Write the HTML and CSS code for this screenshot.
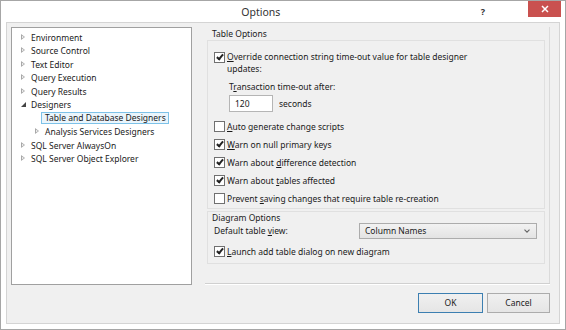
FILE: index.html
```html
<!DOCTYPE html>
<html>
<head>
    <title>Options</title>
    <link rel="stylesheet" href="styles.css">
</head>
<body>
    <div class="window">
        <div class="titlebar">
            <span class="title">Options</span>
            <span class="help">?</span>
            <span class="close">
                <svg width="8" height="8" viewBox="0 0 8 8"><path d="M1 1L7 7M7 1L1 7" stroke="#fff" stroke-width="1.5"/></svg>
            </span>
        </div>
        <div class="client">
            <div class="tree">
                <div class="node"><span class="arrow closed"></span>Environment</div>
                <div class="node"><span class="arrow closed"></span>Source Control</div>
                <div class="node"><span class="arrow closed"></span>Text Editor</div>
                <div class="node"><span class="arrow closed"></span>Query Execution</div>
                <div class="node"><span class="arrow closed"></span>Query Results</div>
                <div class="node"><span class="arrow open"></span>Designers</div>
                <div class="node child"><span class="arrow none"></span><span class="selected">Table and Database Designers</span></div>
                <div class="node child"><span class="arrow closed"></span>Analysis Services Designers</div>
                <div class="node"><span class="arrow closed"></span>SQL Server AlwaysOn</div>
                <div class="node"><span class="arrow closed"></span>SQL Server Object Explorer</div>
            </div>
            <div class="page">
                <div class="panel">
                    <div class="group-label">Table Options</div>
                    <div class="group table-group">
                        <div class="check-row multi">
                            <span class="box checked"></span>
                            <span><u>O</u>verride connection string time-out value for table designer<br>updates:</span>
                        </div>
                        <div class="timeout">
                            <div class="timeout-label">T<u>r</u>ansaction time-out after:</div>
                            <div class="timeout-row">
                                <span class="textbox">120</span>
                                <span>seconds</span>
                            </div>
                        </div>
                        <div class="check-row"><span class="box"></span><span><u>A</u>uto generate change scripts</span></div>
                        <div class="check-row"><span class="box checked"></span><span><u>W</u>arn on null primary keys</span></div>
                        <div class="check-row"><span class="box checked"></span><span>Warn about <u>d</u>ifference detection</span></div>
                        <div class="check-row"><span class="box checked"></span><span>Warn about <u>t</u>ables affected</span></div>
                        <div class="check-row"><span class="box"></span><span>Prevent <u>s</u>aving changes that require table re-creation</span></div>
                    </div>
                    <div class="group diagram-group">
                        <div class="group-label inner">Diagram Options</div>
                        <div class="view-row">
                            <span>Default table <u>v</u>iew:</span>
                            <span class="select">Column Names
                                <svg width="6" height="4" viewBox="0 0 6 4"><path d="M0.5 0.6L3 3.2L5.5 0.6" fill="none" stroke="#666" stroke-width="1.1"/></svg>
                            </span>
                        </div>
                        <div class="check-row launch"><span class="box checked"></span><span><u>L</u>aunch add table dialog on new diagram</span></div>
                    </div>
                </div>
                <div class="separator"></div>
                <div class="buttons">
                    <span class="button default">OK</span>
                    <span class="button">Cancel</span>
                </div>
            </div>
        </div>
    </div>
</body>
</html>
```

FILE: styles.css
```css
body {
    margin: 0;
    font-family: "Noto Sans", "Open Sans", sans-serif;
    font-size: 8.5px;
    color: #1a1a1a;
    background: #fff;
}
.window {
    width: 566px;
    height: 330px;
    box-sizing: border-box;
    border: 1px solid #a6a6a6;
    background: #fff;
    display: flex;
    flex-direction: column;
}
.titlebar {
    height: 21px;
    display: flex;
    align-items: center;
    position: relative;
}
.title {
    flex: 1;
    text-align: center;
    font-size: 10.5px;
    color: #333;
    padding-left: 40px;
}
.help {
    font-weight: bold;
    font-size: 9px;
    color: #333;
    margin-right: 80px;
}
.close {
    position: absolute;
    right: 4px;
    top: 0;
    width: 33px;
    height: 16px;
    background: #c9514f;
    display: flex;
    align-items: center;
    justify-content: center;
}
.client {
    flex: 1;
    margin: 0 5px 5px 5px;
    background: #f0f0f0;
    border: 1px solid #d4d4d4;
    display: flex;
    padding: 4px 0 0 4px;
}
.tree {
    width: 179px;
    height: 253px;
    border: 1px solid #a0a0a0;
    background: #fff;
    padding-top: 2.5px;
}
.node {
    height: 13.5px;
    line-height: 13.5px;
    display: flex;
    align-items: center;
    white-space: nowrap;
}
.node.child {
    padding-left: 14px;
}
.arrow {
    width: 19px;
    height: 7px;
    position: relative;
    flex: none;
}
.arrow.closed::before {
    content: "";
    position: absolute;
    left: 9px;
    top: 0;
    border-left: 4px solid #a8a8a8;
    border-top: 3.5px solid transparent;
    border-bottom: 3.5px solid transparent;
}
.arrow.closed::after {
    content: "";
    position: absolute;
    left: 10px;
    top: 2px;
    border-left: 2px solid #fff;
    border-top: 1.5px solid transparent;
    border-bottom: 1.5px solid transparent;
}
.arrow.open::before {
    content: "";
    position: absolute;
    left: 9px;
    top: 1px;
    border-right: 5px solid #444;
    border-top: 5px solid transparent;
}
.selected {
    border: 1px solid #7dc2e8;
    background: #eaf5fc;
    padding: 0 2px 0 3px;
    margin-left: -4px;
    line-height: 10px;
}
.page {
    width: 345px;
    margin-left: 13px;
    display: flex;
    flex-direction: column;
}
.panel {
    height: 256px;
    border-right: 1px solid #dadada;
    box-sizing: border-box;
}
.group-label {
    padding: 1px 0 0 7px;
    height: 12px;
    line-height: 12px;
}
.group-label.inner {
    padding: 0 0 0 4px;
    height: 10px;
}
.group {
    border: 1px solid #e0e0e0;
    width: 338px;
    margin-left: 2px;
    box-sizing: border-box;
}
.table-group {
    height: 169px;
    padding-top: 10px;
}
.diagram-group {
    margin-top: 2px;
    height: 53px;
}
.check-row {
    display: flex;
    align-items: center;
    padding-left: 6px;
    height: 18px;
}
.check-row.multi {
    align-items: flex-start;
    height: auto;
    line-height: 12px;
}
.check-row.launch {
    margin-top: 3px;
}
.box {
    width: 9px;
    height: 9px;
    border: 1px solid #707070;
    background: #fff;
    margin-right: 2px;
    flex: none;
    position: relative;
}
.check-row.multi .box {
    margin-top: 1px;
}
.box.checked::after {
    content: "";
    position: absolute;
    left: 3px;
    top: 0;
    width: 2px;
    height: 5px;
    border-right: 2px solid #222;
    border-bottom: 2px solid #222;
    transform: rotate(40deg);
}
.timeout {
    padding: 6px 0 5px 21px;
}
.timeout-label {
    line-height: 12px;
}
.timeout-row {
    display: flex;
    align-items: center;
    gap: 6px;
    margin-top: 2px;
}
.textbox {
    width: 37px;
    height: 15px;
    line-height: 15px;
    border: 1px solid #b5b5b5;
    background: #fff;
    padding-left: 5px;
}
.view-row {
    display: flex;
    align-items: center;
    justify-content: space-between;
    padding: 0 7px 0 6px;
    height: 17px;
}
.select {
    width: 165px;
    height: 14px;
    line-height: 14px;
    border: 1px solid #acacac;
    background: linear-gradient(#f2f2f2, #e3e3e3);
    padding: 0 6px 0 5px;
    display: flex;
    justify-content: space-between;
    align-items: center;
}
.separator {
    border-top: 1px solid #d0d0d0;
    border-bottom: 1px solid #fff;
}
.buttons {
    display: flex;
    justify-content: flex-end;
    gap: 4px;
    padding: 8px 0 0 0;
}
.button {
    width: 61px;
    height: 18px;
    line-height: 18px;
    text-align: center;
    border: 1px solid #acacac;
    background: linear-gradient(#f0f0f0, #e5e5e5);
}
.button.default {
    border-color: #3c7fb1;
    width: 63px;
}
u {
    text-decoration-thickness: 1px;
    text-underline-offset: 1px;
}
```
